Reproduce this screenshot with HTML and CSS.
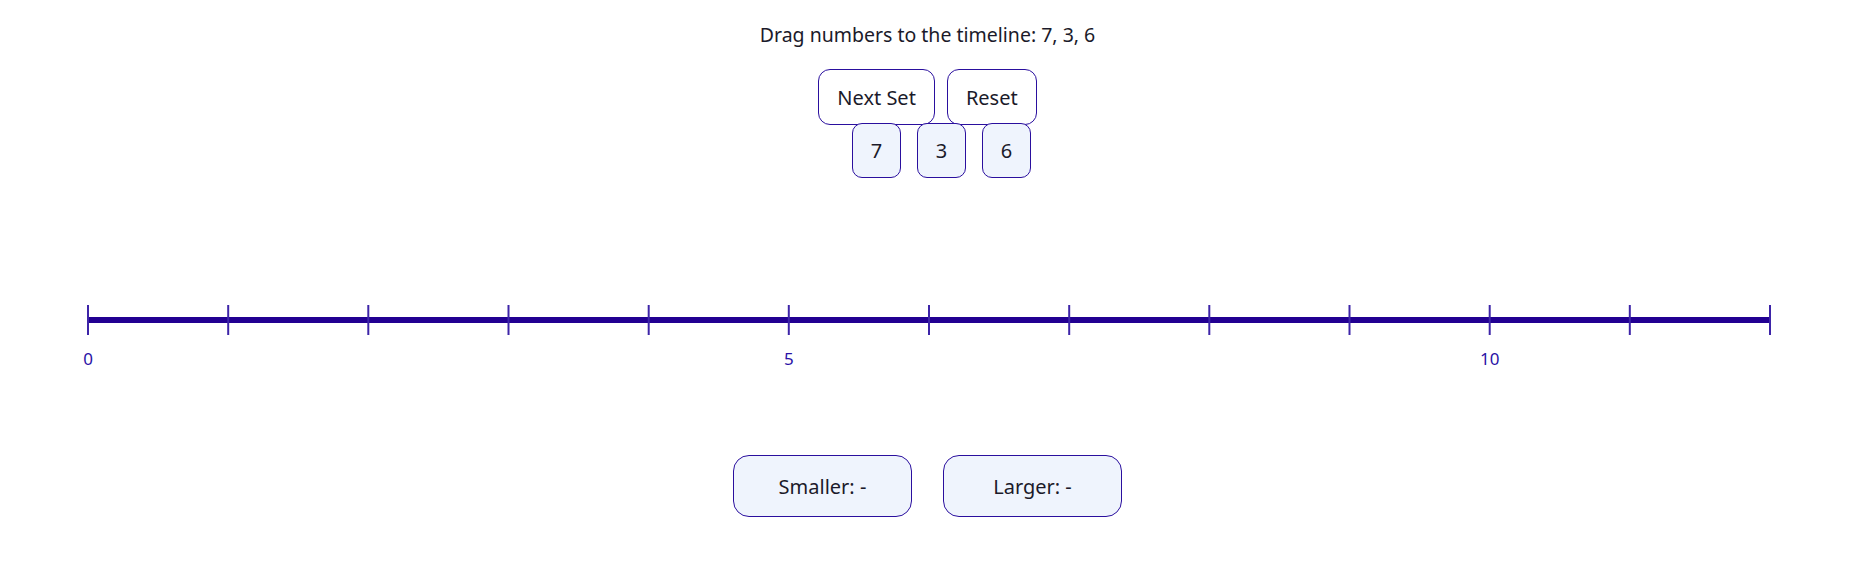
FILE: index.html
```html
<!DOCTYPE html>
<html lang="en">
<head>
<meta charset="utf-8">
<title>Number Timeline</title>
<link rel="stylesheet" href="styles.css">
</head>
<body>
<main class="app">
  <p class="prompt">Drag numbers to the timeline: 7, 3, 6</p>
  <div class="controls">
    <button class="btn">Next Set</button>
    <button class="btn">Reset</button>
  </div>
  <div class="tiles">
    <div class="tile">7</div>
    <div class="tile">3</div>
    <div class="tile">6</div>
  </div>
  <svg class="timeline" viewBox="0 0 1855 120" width="1855" height="120">
    <line class="axis" x1="88" y1="60" x2="1770" y2="60"/>
    <g class="ticks">
      <line x1="88" y1="45" x2="88" y2="75"/>
      <line x1="228.2" y1="45" x2="228.2" y2="75"/>
      <line x1="368.3" y1="45" x2="368.3" y2="75"/>
      <line x1="508.5" y1="45" x2="508.5" y2="75"/>
      <line x1="648.7" y1="45" x2="648.7" y2="75"/>
      <line x1="788.8" y1="45" x2="788.8" y2="75"/>
      <line x1="929" y1="45" x2="929" y2="75"/>
      <line x1="1069.2" y1="45" x2="1069.2" y2="75"/>
      <line x1="1209.3" y1="45" x2="1209.3" y2="75"/>
      <line x1="1349.5" y1="45" x2="1349.5" y2="75"/>
      <line x1="1489.7" y1="45" x2="1489.7" y2="75"/>
      <line x1="1629.8" y1="45" x2="1629.8" y2="75"/>
      <line x1="1770" y1="45" x2="1770" y2="75"/>
    </g>
    <g class="labels">
      <text x="88" y="105">0</text>
      <text x="788.8" y="105">5</text>
      <text x="1489.7" y="105">10</text>
    </g>
  </svg>
  <div class="results">
    <div class="result">Smaller: -</div>
    <div class="result">Larger: -</div>
  </div>
</main>
</body>
</html>
```

FILE: styles.css
```css
html, body {
  margin: 0;
  padding: 0;
  background: #ffffff;
}

body {
  font-family: "Noto Sans", "Open Sans", sans-serif;
  color: #1b1a2a;
}

.app {
  display: flex;
  flex-direction: column;
  align-items: center;
  width: 1855px;
}

.prompt {
  margin: 23px 0 0;
  font-size: 19.5px;
  line-height: 24px;
}

.controls {
  display: flex;
  gap: 12px;
  margin-top: 22px;
}

.btn {
  height: 56px;
  padding: 0 18px;
  font-family: inherit;
  font-size: 20px;
  color: #1b1a2a;
  background: #ffffff;
  border: 1px solid #2a0f9e;
  border-radius: 12px;
}

.tiles {
  display: flex;
  gap: 16px;
  margin-top: -2px;
  padding-left: 28px;
}

.tile {
  width: 47px;
  height: 53px;
  display: flex;
  align-items: center;
  justify-content: center;
  font-size: 20px;
  background: #eff4fd;
  border: 1px solid #2a0f9e;
  border-radius: 10px;
}

.timeline {
  display: block;
  margin-top: 82px;
}

.axis {
  stroke: #220092;
  stroke-width: 6;
}

.ticks line {
  stroke: #3d24a8;
  stroke-width: 2;
}

.labels text {
  font-family: "Noto Sans", "Open Sans", sans-serif;
  font-size: 17px;
  fill: #2a12a6;
  text-anchor: middle;
}

.results {
  display: flex;
  gap: 31px;
  margin-top: 75px;
}

.result {
  width: 177px;
  height: 60px;
  display: flex;
  align-items: center;
  justify-content: center;
  font-size: 20px;
  background: #eff4fd;
  border: 1px solid #2a0f9e;
  border-radius: 16px;
}
```
